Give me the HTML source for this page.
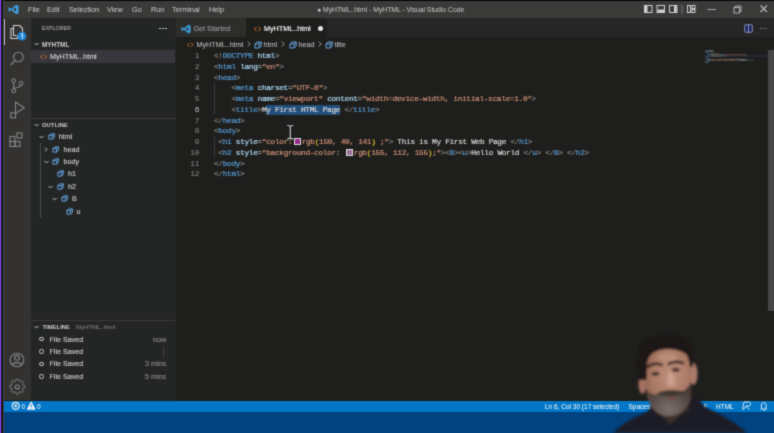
<!DOCTYPE html>
<html><head><meta charset="utf-8">
<style>
*{margin:0;padding:0;box-sizing:border-box}
html,body{width:774px;height:433px;overflow:hidden;background:#1e1e1c;font-family:"Liberation Sans",sans-serif}
.a{position:absolute;white-space:pre}
#purple{left:0;top:0;width:1px;height:433px;background:#8f44fc}
#dk{left:1px;top:0;width:2px;height:433px;background:#11151a}
#gr{left:3px;top:0;width:1px;height:433px;background:#45474a}
#topb{left:4px;top:0;width:770px;height:1px;background:#050505}
#title{left:4px;top:1px;width:770px;height:17px;background:#3a3a38}
#act{left:4px;top:18px;width:27px;height:382px;background:#333230}
#side{left:31px;top:18px;width:145px;height:382px;background:#242625}
#tabs{left:176px;top:18px;width:598px;height:19px;background:#252625}
#editor{left:176px;top:37px;width:598px;height:363px;background:#1e1e1c}
#status{left:4px;top:400.6px;width:770px;height:11px;background:#0277c8}
#below{left:4px;top:411.6px;width:770px;height:22px;background:#01427f}
.ui{font-size:7.2px;line-height:9px;-webkit-text-stroke:0.12px}
.bc{top:39.5px;color:#b4b4b4}
.st{top:402px;font-size:6.5px;line-height:9px;color:#ffffff}
.menu{top:5px;font-size:7.3px;color:#cccccc}
.code{-webkit-text-stroke:0.2px;font-family:"Liberation Mono",monospace;font-size:7.8px;letter-spacing:-0.33px;line-height:10.75px;color:#d4d4d4}
.ln{font-family:"Liberation Mono",monospace;font-size:7.8px;letter-spacing:-0.33px;color:#8c8c8c;text-align:right;width:20px}
.y{color:#e8c830}.g{color:#808080}.t{color:#569cd6}.at{color:#b0dcf6}.s{color:#ce9178}.w{color:#d4d4d4}
.sw{display:inline-block;width:6.6px;height:6.6px;border:0.8px solid #ddd;vertical-align:-0.8px;margin:0 1.1px 0 1.6px}
</style></head><body><svg width="0" height="0" style="position:absolute"><filter id="gb" x="0" y="0" width="100%" height="100%" color-interpolation-filters="sRGB"><feConvolveMatrix order="3" kernelMatrix="1 4 1 4 16 4 1 4 1" divisor="36" edgeMode="duplicate"/></filter></svg><div id="root" style="position:absolute;left:0;top:0;width:774px;height:433px;filter:url(#gb)">
<div class="a" id="purple"></div><div class="a" id="dk"></div><div class="a" id="gr"></div>
<div class="a" id="topb"></div>
<div class="a" id="title"></div>
<div class="a" id="act"></div>
<div class="a" id="side"></div>
<div class="a" id="tabs"></div>
<div class="a" id="editor"></div>
<div class="a" id="status"></div>
<div class="a" id="below"></div>

<!-- title bar -->
<svg class="a" style="left:8px;top:4px" width="11" height="11" viewBox="0 0 24 24"><path d="M17.5 1.5 L23 4 V20 L17.5 22.5 L7 13 L2.5 16.5 L1 15.5 V8.5 L2.5 7.5 L7 11 Z M17.5 7 L11 12 L17.5 17 Z" fill="#3c9fe0"/></svg>
<div class="a menu" style="left:28px">File</div>
<div class="a menu" style="left:47px">Edit</div>
<div class="a menu" style="left:69px">Selection</div>
<div class="a menu" style="left:107px">View</div>
<div class="a menu" style="left:132px">Go</div>
<div class="a menu" style="left:151px">Run</div>
<div class="a menu" style="left:172px">Terminal</div>
<div class="a menu" style="left:209px">Help</div>
<div class="a menu" style="left:317px;color:#c8c8c8;font-size:6.8px;top:5.5px">● MyHTML..html - MyHTML - Visual Studio Code</div>


<!-- activity bar -->
<div class="a" style="left:4px;top:19px;width:1px;height:26px;background:#bdbdbd"></div>
<svg class="a" style="left:0;top:0" width="31" height="400" viewBox="0 0 31 400">
 <g fill="none" stroke="#d0d0d0" stroke-width="1.1" stroke-linejoin="round">
  <path d="M13.5 28.5 H11 V38.5 H17.5 V36"/>
  <path d="M13.5 25.5 H19.5 L22.5 28.5 V33 M13.5 25.5 V35.5 H17"/>
 </g>
 <circle cx="21.9" cy="36.2" r="4.4" fill="#1f86d6"/>
 <path d="M21.3 34.2 L22.3 33.6 V38.6" stroke="#fff" stroke-width="0.9" fill="none"/>
 <g fill="none" stroke="#868686" stroke-width="1.1">
  <circle cx="18.4" cy="57" r="4.8"/>
  <path d="M15 60.5 L10.8 65"/>
  <circle cx="13.7" cy="80.6" r="1.9"/>
  <circle cx="21" cy="83.4" r="1.9"/>
  <circle cx="13.7" cy="90.9" r="1.9"/>
  <path d="M13.7 82.5 V89 M21 85.3 C21 88 14.5 87 13.9 89"/>
  <path d="M15.5 102 L24.3 107.8 L15.5 113.5 Z"/>
  <rect x="10.8" y="112.8" width="4.8" height="5" fill="#333230"/>
  <rect x="10" y="136.5" width="5" height="5"/>
  <rect x="10" y="141.5" width="5" height="5"/>
  <rect x="15" y="141.5" width="5" height="5"/>
  <rect x="17" y="133" width="5" height="5"/>
  <circle cx="17" cy="360" r="6.8"/>
  <circle cx="17" cy="357.8" r="2.4"/>
  <path d="M12.5 365 C13.5 361.8 20.5 361.8 21.5 365"/>
 </g>
 <g transform="translate(17.3 387)" fill="none" stroke="#868686" stroke-width="1.1">
  <path d="M-1.5 -7 H1.5 L2 -5 L3.8 -4.2 L5.5 -5.4 L7.5 -3.4 L6.3 -1.6 L7 0.2 L9 0.7 V3.3 L7 3.8 L6.3 5.6 L7.5 7.4 L5.5 9.4 L3.8 8.2 L2 9 L1.5 11 H-1.5 L-2 9 L-3.8 8.2 L-5.5 9.4 L-7.5 7.4 L-6.3 5.6 L-7 3.8 L-9 3.3 V0.7 L-7 0.2 L-6.3 -1.6 L-7.5 -3.4 L-5.5 -5.4 L-3.8 -4.2 L-2 -5 Z" transform="translate(0 -2) scale(0.82)"/>
  <circle cx="0" cy="0" r="2"/>
 </g>
</svg>

<!-- window controls -->
<svg class="a" style="left:640px;top:1px" width="134" height="17" viewBox="640 1 134 17">
 <g fill="none" stroke="#cfcfcf" stroke-width="1">
  <rect x="644.5" y="5.5" width="7.5" height="7"/>
  <rect x="657" y="5.5" width="7.5" height="7"/>
  <rect x="669.5" y="5.5" width="7.5" height="7"/>
  <path d="M682 4.5 V13.5" stroke="#777"/>
  <rect x="687.5" y="5.5" width="3" height="7"/>
  <rect x="692" y="5.5" width="3" height="3"/>
  <rect x="692" y="9.5" width="3" height="3"/>
  <path d="M707.5 9.5 H716" stroke="#a8a8a8"/>
  <rect x="734" y="7.5" width="5.5" height="5.5" stroke="#b0b0b0"/>
  <path d="M735.5 7.5 V6 H741 V11.5 H739.5" stroke="#b0b0b0"/>
  <path d="M760.5 5.5 L767 12 M767 5.5 L760.5 12" stroke-width="1.1" stroke="#c4c4c4"/>
 </g>
 <rect x="645" y="6" width="2.5" height="6" fill="#cfcfcf"/>
 <rect x="657.5" y="9.5" width="6.5" height="2.5" fill="#cfcfcf"/>
 <rect x="674" y="6" width="2.5" height="6" fill="#cfcfcf"/>
</svg>

<!-- status bar -->
<svg class="a" style="left:0;top:400px" width="774" height="11" viewBox="0 400 774 11">
 <g fill="none" stroke="#e8f1f9" stroke-width="0.9">
  <circle cx="15.7" cy="405.8" r="3.5" stroke-width="1.2"/>
  <path d="M14.3 404.4 L17.1 407.2 M17.1 404.4 L14.3 407.2" stroke-width="1.1"/>
  <path d="M31.2 401.8 L35.2 409.3 H27.2 Z" fill="#e8f1f9" stroke-linejoin="round"/>
  <path d="M31.2 404.2 V407 M31.2 407.8 V408.5" stroke="#0678c9" stroke-width="0.9"/>
 </g>
</svg>
<div class="a st" style="left:21.5px">0</div>
<div class="a st" style="left:37px">0</div>
<div class="a st" style="left:545px">Ln 6, Col 30 (17 selected)</div>
<div class="a st" style="left:628.5px">Spaces: 4</div>
<div class="a st" style="left:676px">UTF-8</div>
<div class="a st" style="left:700px">LF</div>
<div class="a st" style="left:716px">HTML</div>
<svg class="a" style="left:740px;top:401px" width="30" height="10" viewBox="740 401 30 10">
 <g fill="none" stroke="#e8f1f9" stroke-width="0.9">
  <path d="M744 402 H749 C751 402 751 406 749 406 H746 L743.5 409.5 M746 406 L749.5 409.5 M744 402 L742.5 409.5"/>
  <path d="M760.5 409 H767 M761.5 408.5 V405 C761.5 401.8 766 401.8 766 405 V408.5 M763 410 H765"/>
 </g>
</svg>


<!-- selection + guides -->
<div class="a" style="left:266.4px;top:104.5px;width:73.8px;height:10px;background:#224e7c"></div>
<div class="a" style="left:214px;top:83px;width:1px;height:31px;background:#3b3b3b"></div>
<div class="a" style="left:214px;top:136.5px;width:1px;height:20.5px;background:#3b3b3b"></div>

<!-- code -->
<div class="a ln" style="left:179px;top:51px;line-height:10.75px">1
2
3
4
5
<span style="color:#c6c6c6">6</span>
7
8
9
10
11
12</div>
<div class="a code" style="left:214px;top:51px"><span class="g">&lt;!</span><span class="t">DOCTYPE</span> <span class="at">html</span><span class="g">&gt;</span>
<span class="g">&lt;</span><span class="t">html</span> <span class="at">lang</span>=<span class="s">"en"</span><span class="g">&gt;</span>
<span class="g">&lt;</span><span class="t">head</span><span class="g">&gt;</span>
    <span class="g">&lt;</span><span class="t">meta</span> <span class="at">charset</span>=<span class="s">"UTF-8"</span><span class="g">&gt;</span>
    <span class="g">&lt;</span><span class="t">meta</span> <span class="at">name</span>=<span class="s">"viewport"</span> <span class="at">content</span>=<span class="s">"width=device-width, initial-scale=1.0"</span><span class="g">&gt;</span>
    <span class="g">&lt;</span><span class="t">title</span><span class="g">&gt;</span>My First HTML Page <span class="g">&lt;/</span><span class="t">title</span><span class="g">&gt;</span>
<span class="g">&lt;/</span><span class="t">head</span><span class="g">&gt;</span>
<span class="g">&lt;</span><span class="t">body</span><span class="g">&gt;</span>
 <span class="g">&lt;</span><span class="t">h1</span> <span class="at">style</span>=<span class="s">"color:</span><span class="sw" style="background:#96288d"></span><span class="s">rgb<span class="y">(</span>150, 40, 141<span class="y">)</span> ;"</span><span class="g">&gt;</span> This is My First Web Page <span class="g">&lt;/</span><span class="t">h1</span><span class="g">&gt;</span>
 <span class="g">&lt;</span><span class="t">h2</span> <span class="at">style</span>=<span class="s">"background-color: </span><span class="sw" style="background:#9b709b"></span><span class="s">rgb<span class="y">(</span>155, 112, 155<span class="y">)</span>;"</span><span class="g">&gt;</span><span class="g">&lt;</span><span class="t">B</span><span class="g">&gt;&lt;</span><span class="t">u</span><span class="g">&gt;</span>Hello World <span class="g">&lt;/</span><span class="t">u</span><span class="g">&gt;</span> <span class="g">&lt;/</span><span class="t">B</span><span class="g">&gt;</span> <span class="g">&lt;/</span><span class="t">h2</span><span class="g">&gt;</span>
<span class="g">&lt;/</span><span class="t">body</span><span class="g">&gt;</span>
<span class="g">&lt;/</span><span class="t">html</span><span class="g">&gt;</span></div>


<!-- tabs -->
<div class="a" style="left:176px;top:18px;width:70px;height:19px;background:#2d2d2c"></div>
<div class="a" style="left:246px;top:18px;width:81px;height:19px;background:#1e1e1c"></div>
<svg class="a" style="left:181px;top:23.5px" width="10" height="10" viewBox="0 0 24 24"><path d="M17.5 1.5 L23 4 V20 L17.5 22.5 L7 13 L2.5 16.5 L1 15.5 V8.5 L2.5 7.5 L7 11 Z M17.5 7 L11 12 L17.5 17 Z" fill="#3c9fe0"/></svg>
<div class="a ui" style="left:193.5px;top:24px;color:#9a9a9a">Get Started</div>
<svg class="a" style="left:254px;top:25.5px" width="7" height="6" viewBox="0 0 14 12"><path d="M5 1.5 L1.2 6 L5 10.5 M9 1.5 L12.8 6 L9 10.5" stroke="#e37933" stroke-width="1.8" fill="none"/></svg>
<div class="a ui" style="left:264px;top:24px;color:#ffffff">MyHTML..html</div>
<div class="a" style="left:317.5px;top:26px;width:5px;height:5px;border-radius:50%;background:#e8e8e8"></div>
<!-- editor actions -->
<svg class="a" style="left:744px;top:23.5px" width="9" height="9" viewBox="0 0 18 18"><rect x="1.5" y="1.5" width="15" height="15" rx="1.5" stroke="#9aa2cc" stroke-width="1.8" fill="#1a2458"/><line x1="9" y1="1.5" x2="9" y2="16.5" stroke="#9aa2cc" stroke-width="1.8"/></svg>
<div class="a" style="left:759.5px;top:27.5px;width:1.6px;height:1.6px;background:#a0a0a0;box-shadow:2.8px 0 #a0a0a0,5.6px 0 #a0a0a0"></div>
<!-- breadcrumbs -->
<svg class="a" style="left:187px;top:41.5px" width="6.5" height="5.5" viewBox="0 0 14 12"><path d="M5 1.5 L1.2 6 L5 10.5 M9 1.5 L12.8 6 L9 10.5" stroke="#e37933" stroke-width="1.8" fill="none"/></svg>
<div class="a ui bc" style="left:196.5px">MyHTML..html</div>
<svg class="a" style="left:247.0px;top:41px" width="4" height="6" viewBox="0 0 4 6"><path d="M0.7 0.5 L3.2 3 L0.7 5.5" stroke="#a8a8a8" stroke-width="0.9" fill="none"/></svg>
<svg class="a cube" style="left:254px;top:40.5px" width="8" height="8" viewBox="0 0 16 16"><path d="M2 6 L6 2 H14.5 V10 L10.5 14 H2 Z M2 6 H10.5 L14.5 2 M10.5 6 V14" stroke="#6cb4f8" stroke-width="1.8" fill="none" stroke-linejoin="round"/></svg>
<div class="a ui bc" style="left:263.5px">html</div>
<svg class="a" style="left:281.0px;top:41px" width="4" height="6" viewBox="0 0 4 6"><path d="M0.7 0.5 L3.2 3 L0.7 5.5" stroke="#a8a8a8" stroke-width="0.9" fill="none"/></svg>
<svg class="a cube" style="left:288.5px;top:40.5px" width="8" height="8" viewBox="0 0 16 16"><path d="M2 6 L6 2 H14.5 V10 L10.5 14 H2 Z M2 6 H10.5 L14.5 2 M10.5 6 V14" stroke="#6cb4f8" stroke-width="1.8" fill="none" stroke-linejoin="round"/></svg>
<div class="a ui bc" style="left:298.5px">head</div>
<svg class="a" style="left:317.5px;top:41px" width="4" height="6" viewBox="0 0 4 6"><path d="M0.7 0.5 L3.2 3 L0.7 5.5" stroke="#a8a8a8" stroke-width="0.9" fill="none"/></svg>
<svg class="a cube" style="left:324.5px;top:40.5px" width="8" height="8" viewBox="0 0 16 16"><path d="M2 6 L6 2 H14.5 V10 L10.5 14 H2 Z M2 6 H10.5 L14.5 2 M10.5 6 V14" stroke="#6cb4f8" stroke-width="1.8" fill="none" stroke-linejoin="round"/></svg>
<div class="a ui bc" style="left:334.5px">title</div>

<!-- sidebar -->
<div class="a sm" style="left:42px;top:24.5px;font-size:5.3px;color:#bbbbbb">EXPLORER</div>
<div class="a" style="left:159px;top:27.5px;width:1.6px;height:1.6px;background:#c5c5c5;box-shadow:3px 0 #c5c5c5,6px 0 #c5c5c5"></div>
<svg class="a" style="left:33.5px;top:41.5px" width="5" height="4" viewBox="0 0 10 8"><path d="M1 2 L5 6 L9 2" stroke="#c8c8c8" stroke-width="1.9" fill="none"/></svg>
<div class="a" style="left:42px;top:41px;font-size:6.4px;font-weight:bold;color:#cccccc">MYHTML</div>
<div class="a" style="left:31px;top:50px;width:144px;height:12.5px;background:#37373d"></div>
<svg class="a" style="left:39.5px;top:53.5px" width="7" height="6" viewBox="0 0 14 12"><path d="M5 1.5 L1.2 6 L5 10.5 M9 1.5 L12.8 6 L9 10.5" stroke="#e37933" stroke-width="1.8" fill="none"/></svg>
<div class="a ui" style="left:50px;top:52px;color:#d6d6d6">MyHTML..html</div>

<div class="a" style="left:31px;top:118px;width:144px;height:1px;background:#393939"></div>
<svg class="a" style="left:33.5px;top:122.5px" width="5" height="4" viewBox="0 0 10 8"><path d="M1 2 L5 6 L9 2" stroke="#c8c8c8" stroke-width="1.9" fill="none"/></svg>
<div class="a" style="left:42px;top:122px;font-size:5.9px;font-weight:bold;color:#cccccc">OUTLINE</div>
<div class="a" style="left:40px;top:143px;width:1px;height:75px;background:#4a4a4a"></div>

<div class="a" style="left:31px;top:320px;width:144px;height:1px;background:#393939"></div>
<svg class="a" style="left:33.5px;top:325px" width="5" height="4" viewBox="0 0 10 8"><path d="M1 2 L5 6 L9 2" stroke="#c8c8c8" stroke-width="1.9" fill="none"/></svg>
<div class="a" style="left:42.5px;top:323.5px;font-size:5.9px;font-weight:bold;color:#cccccc">TIMELINE</div>
<div class="a" style="left:76px;top:323.5px;font-size:6px;color:#8a8a8a">MyHTML..html</div>
<svg class="a" style="left:38.9px;top:134.9px" width="5" height="4" viewBox="0 0 10 8"><path d="M1 2 L5 6 L9 2" stroke="#c8c8c8" stroke-width="1.9" fill="none"/></svg>
<svg class="a" style="left:47.8px;top:133.4px" width="7" height="7" viewBox="0 0 16 16"><path d="M2 6 L6 2 H14.5 V10 L10.5 14 H2 Z M2 6 H10.5 L14.5 2 M10.5 6 V14" stroke="#6cb4f8" stroke-width="2" fill="none" stroke-linejoin="round"/></svg>
<div class="a ui" style="left:58.7px;top:132.4px;color:#cccccc">html</div>
<svg class="a" style="left:44px;top:146.8px" width="4" height="5" viewBox="0 0 8 10"><path d="M2 1 L6 5 L2 9" stroke="#c8c8c8" stroke-width="1.9" fill="none"/></svg>
<svg class="a" style="left:52.3px;top:145.8px" width="7" height="7" viewBox="0 0 16 16"><path d="M2 6 L6 2 H14.5 V10 L10.5 14 H2 Z M2 6 H10.5 L14.5 2 M10.5 6 V14" stroke="#6cb4f8" stroke-width="2" fill="none" stroke-linejoin="round"/></svg>
<div class="a ui" style="left:63.5px;top:144.8px;color:#cccccc">head</div>
<svg class="a" style="left:44px;top:159.6px" width="5" height="4" viewBox="0 0 10 8"><path d="M1 2 L5 6 L9 2" stroke="#c8c8c8" stroke-width="1.9" fill="none"/></svg>
<svg class="a" style="left:52.3px;top:158.1px" width="7" height="7" viewBox="0 0 16 16"><path d="M2 6 L6 2 H14.5 V10 L10.5 14 H2 Z M2 6 H10.5 L14.5 2 M10.5 6 V14" stroke="#6cb4f8" stroke-width="2" fill="none" stroke-linejoin="round"/></svg>
<div class="a ui" style="left:63.5px;top:157.1px;color:#cccccc">body</div>
<svg class="a" style="left:56.6px;top:170.4px" width="7" height="7" viewBox="0 0 16 16"><path d="M2 6 L6 2 H14.5 V10 L10.5 14 H2 Z M2 6 H10.5 L14.5 2 M10.5 6 V14" stroke="#6cb4f8" stroke-width="2" fill="none" stroke-linejoin="round"/></svg>
<div class="a ui" style="left:67.9px;top:169.4px;color:#cccccc">h1</div>
<svg class="a" style="left:48.3px;top:184.5px" width="5" height="4" viewBox="0 0 10 8"><path d="M1 2 L5 6 L9 2" stroke="#c8c8c8" stroke-width="1.9" fill="none"/></svg>
<svg class="a" style="left:56.6px;top:183.0px" width="7" height="7" viewBox="0 0 16 16"><path d="M2 6 L6 2 H14.5 V10 L10.5 14 H2 Z M2 6 H10.5 L14.5 2 M10.5 6 V14" stroke="#6cb4f8" stroke-width="2" fill="none" stroke-linejoin="round"/></svg>
<div class="a ui" style="left:67.9px;top:182.0px;color:#cccccc">h2</div>
<svg class="a" style="left:52.3px;top:196.8px" width="5" height="4" viewBox="0 0 10 8"><path d="M1 2 L5 6 L9 2" stroke="#c8c8c8" stroke-width="1.9" fill="none"/></svg>
<svg class="a" style="left:61px;top:195.3px" width="7" height="7" viewBox="0 0 16 16"><path d="M2 6 L6 2 H14.5 V10 L10.5 14 H2 Z M2 6 H10.5 L14.5 2 M10.5 6 V14" stroke="#6cb4f8" stroke-width="2" fill="none" stroke-linejoin="round"/></svg>
<div class="a ui" style="left:72px;top:194.3px;color:#cccccc">B</div>
<svg class="a" style="left:65.5px;top:207.5px" width="7" height="7" viewBox="0 0 16 16"><path d="M2 6 L6 2 H14.5 V10 L10.5 14 H2 Z M2 6 H10.5 L14.5 2 M10.5 6 V14" stroke="#6cb4f8" stroke-width="2" fill="none" stroke-linejoin="round"/></svg>
<div class="a ui" style="left:76.4px;top:206.5px;color:#cccccc">u</div>
<div class="a" style="left:39.3px;top:336.9px;width:4.6px;height:4.6px;border-radius:50%;border:1.2px solid #c5c5c5"></div>
<div class="a ui" style="left:49.4px;top:334.7px;color:#cccccc">File Saved</div>
<div class="a ui" style="right:607.8px;top:334.7px;color:#8a8a8a">now</div>
<div class="a" style="left:39.3px;top:349.09999999999997px;width:4.6px;height:4.6px;border-radius:50%;border:1.2px solid #c5c5c5"></div>
<div class="a ui" style="left:49.4px;top:346.9px;color:#cccccc">File Saved</div>
<div class="a" style="left:39.3px;top:361.5px;width:4.6px;height:4.6px;border-radius:50%;border:1.2px solid #c5c5c5"></div>
<div class="a ui" style="left:49.4px;top:359.3px;color:#cccccc">File Saved</div>
<div class="a ui" style="right:607.8px;top:359.3px;color:#8a8a8a">3 mins</div>
<div class="a" style="left:39.3px;top:374.0px;width:4.6px;height:4.6px;border-radius:50%;border:1.2px solid #c5c5c5"></div>
<div class="a ui" style="left:49.4px;top:371.8px;color:#cccccc">File Saved</div>
<div class="a ui" style="right:607.8px;top:371.8px;color:#8a8a8a">5 mins</div>
<div class="a" style="left:162.5px;top:347px;width:0.6px;height:10px;background:#444"></div>

<!-- I-beam -->
<svg class="a" style="left:284px;top:122px" width="12" height="20" viewBox="284 122 12 20">
 <path d="M287.2 125.5 C288.5 125.5 289.6 125.5 290.3 126.5 C291 125.5 292 125.5 293.3 125.5 M290.3 126.5 V137.8 M287.2 138.8 C288.5 138.8 289.6 138.8 290.3 137.8 C291 138.8 292 138.8 293.3 138.8" stroke="#111" stroke-width="2.6" fill="none"/>
 <path d="M287.2 125.5 C288.5 125.5 289.6 125.5 290.3 126.5 C291 125.5 292 125.5 293.3 125.5 M290.3 126.5 V137.8 M287.2 138.8 C288.5 138.8 289.6 138.8 290.3 137.8 C291 138.8 292 138.8 293.3 138.8" stroke="#cfcfcf" stroke-width="1.2" fill="none"/>
</svg>
<!-- scrollbar -->
<div class="a" style="left:768px;top:90px;width:6px;height:1px;background:#6a6a6a"></div>
<div class="a" style="left:768px;top:50px;width:6px;height:261px;background:#474747"></div>
<svg class="a" style="left:700px;top:46px;opacity:0.45" width="70" height="22" viewBox="700 46 70 22">
<rect x="705" y="55.5" width="63" height="1" fill="#264f78"/>
<rect x="705.00" y="50.00" width="1.14" height="0.9" fill="#808080"/><rect x="706.14" y="50.00" width="3.99" height="0.9" fill="#569cd6"/><rect x="710.13" y="50.00" width="0.57" height="0.9" fill="#d4d4d4"/><rect x="710.70" y="50.00" width="2.28" height="0.9" fill="#9cdcfe"/><rect x="712.98" y="50.00" width="0.57" height="0.9" fill="#808080"/>
<rect x="705.00" y="51.10" width="0.57" height="0.9" fill="#808080"/><rect x="705.57" y="51.10" width="2.28" height="0.9" fill="#569cd6"/><rect x="707.85" y="51.10" width="0.57" height="0.9" fill="#d4d4d4"/><rect x="708.42" y="51.10" width="2.28" height="0.9" fill="#9cdcfe"/><rect x="710.70" y="51.10" width="0.57" height="0.9" fill="#d4d4d4"/><rect x="711.27" y="51.10" width="2.28" height="0.9" fill="#ce9178"/><rect x="713.55" y="51.10" width="0.57" height="0.9" fill="#808080"/>
<rect x="705.00" y="52.20" width="0.57" height="0.9" fill="#808080"/><rect x="705.57" y="52.20" width="2.28" height="0.9" fill="#569cd6"/><rect x="707.85" y="52.20" width="0.57" height="0.9" fill="#808080"/>
<rect x="707.28" y="53.30" width="0.57" height="0.9" fill="#808080"/><rect x="707.85" y="53.30" width="2.28" height="0.9" fill="#569cd6"/><rect x="710.70" y="53.30" width="3.99" height="0.9" fill="#9cdcfe"/><rect x="714.69" y="53.30" width="0.57" height="0.9" fill="#d4d4d4"/><rect x="715.26" y="53.30" width="3.99" height="0.9" fill="#ce9178"/><rect x="719.25" y="53.30" width="0.57" height="0.9" fill="#808080"/>
<rect x="707.28" y="54.40" width="0.57" height="0.9" fill="#808080"/><rect x="707.85" y="54.40" width="2.28" height="0.9" fill="#569cd6"/><rect x="710.70" y="54.40" width="2.28" height="0.9" fill="#9cdcfe"/><rect x="712.98" y="54.40" width="0.57" height="0.9" fill="#d4d4d4"/><rect x="713.55" y="54.40" width="5.70" height="0.9" fill="#ce9178"/><rect x="719.82" y="54.40" width="3.99" height="0.9" fill="#9cdcfe"/><rect x="723.81" y="54.40" width="0.57" height="0.9" fill="#d4d4d4"/><rect x="724.38" y="54.40" width="22.23" height="0.9" fill="#ce9178"/><rect x="746.61" y="54.40" width="0.57" height="0.9" fill="#808080"/>
<rect x="707.28" y="55.50" width="0.57" height="0.9" fill="#808080"/><rect x="707.85" y="55.50" width="2.85" height="0.9" fill="#569cd6"/><rect x="710.70" y="55.50" width="0.57" height="0.9" fill="#808080"/><rect x="711.27" y="55.50" width="10.26" height="0.9" fill="#d4d4d4"/><rect x="721.53" y="55.50" width="1.14" height="0.9" fill="#808080"/><rect x="722.67" y="55.50" width="2.85" height="0.9" fill="#569cd6"/><rect x="725.52" y="55.50" width="0.57" height="0.9" fill="#808080"/>
<rect x="705.00" y="56.60" width="1.14" height="0.9" fill="#808080"/><rect x="706.14" y="56.60" width="2.28" height="0.9" fill="#569cd6"/><rect x="708.42" y="56.60" width="0.57" height="0.9" fill="#808080"/>
<rect x="705.00" y="57.70" width="0.57" height="0.9" fill="#808080"/><rect x="705.57" y="57.70" width="2.28" height="0.9" fill="#569cd6"/><rect x="707.85" y="57.70" width="0.57" height="0.9" fill="#808080"/>
<rect x="705.57" y="58.80" width="0.57" height="0.9" fill="#808080"/><rect x="706.14" y="58.80" width="1.14" height="0.9" fill="#569cd6"/><rect x="707.85" y="58.80" width="2.85" height="0.9" fill="#9cdcfe"/><rect x="710.70" y="58.80" width="0.57" height="0.9" fill="#d4d4d4"/><rect x="711.27" y="58.80" width="4.56" height="0.9" fill="#ce9178"/><rect x="716.97" y="58.80" width="11.97" height="0.9" fill="#ce9178"/><rect x="728.94" y="58.80" width="0.57" height="0.9" fill="#808080"/><rect x="729.51" y="58.80" width="15.39" height="0.9" fill="#d4d4d4"/><rect x="744.90" y="58.80" width="1.14" height="0.9" fill="#808080"/><rect x="746.04" y="58.80" width="1.14" height="0.9" fill="#569cd6"/><rect x="747.18" y="58.80" width="0.57" height="0.9" fill="#808080"/>
<rect x="705.57" y="59.90" width="0.57" height="0.9" fill="#808080"/><rect x="706.14" y="59.90" width="1.14" height="0.9" fill="#569cd6"/><rect x="707.85" y="59.90" width="2.85" height="0.9" fill="#9cdcfe"/><rect x="710.70" y="59.90" width="0.57" height="0.9" fill="#d4d4d4"/><rect x="711.27" y="59.90" width="10.83" height="0.9" fill="#ce9178"/><rect x="723.24" y="59.90" width="11.97" height="0.9" fill="#ce9178"/><rect x="735.21" y="59.90" width="0.57" height="0.9" fill="#808080"/><rect x="735.78" y="59.90" width="0.57" height="0.9" fill="#808080"/><rect x="736.35" y="59.90" width="0.57" height="0.9" fill="#569cd6"/><rect x="736.92" y="59.90" width="1.14" height="0.9" fill="#808080"/><rect x="738.06" y="59.90" width="0.57" height="0.9" fill="#569cd6"/><rect x="738.63" y="59.90" width="0.57" height="0.9" fill="#808080"/><rect x="739.20" y="59.90" width="6.84" height="0.9" fill="#d4d4d4"/><rect x="746.04" y="59.90" width="1.14" height="0.9" fill="#808080"/><rect x="747.18" y="59.90" width="0.57" height="0.9" fill="#569cd6"/><rect x="747.75" y="59.90" width="1.14" height="0.9" fill="#808080"/><rect x="748.89" y="59.90" width="1.14" height="0.9" fill="#808080"/><rect x="750.03" y="59.90" width="0.57" height="0.9" fill="#569cd6"/><rect x="750.60" y="59.90" width="1.14" height="0.9" fill="#808080"/><rect x="751.74" y="59.90" width="1.14" height="0.9" fill="#808080"/><rect x="752.88" y="59.90" width="1.14" height="0.9" fill="#569cd6"/><rect x="754.02" y="59.90" width="0.57" height="0.9" fill="#808080"/>
<rect x="705.00" y="61.00" width="1.14" height="0.9" fill="#808080"/><rect x="706.14" y="61.00" width="2.28" height="0.9" fill="#569cd6"/><rect x="708.42" y="61.00" width="0.57" height="0.9" fill="#808080"/>
<rect x="705.00" y="62.10" width="1.14" height="0.9" fill="#808080"/><rect x="706.14" y="62.10" width="2.28" height="0.9" fill="#569cd6"/><rect x="708.42" y="62.10" width="0.57" height="0.9" fill="#808080"/>
</svg>

<!-- person -->
<svg class="a" style="left:600px;top:320px" width="174" height="113" viewBox="600 320 174 113">
 <defs>
  <filter id="bl" x="-20%" y="-20%" width="140%" height="140%"><feGaussianBlur stdDeviation="0.9"/></filter>
  <filter id="bl2" x="-30%" y="-30%" width="160%" height="160%"><feGaussianBlur stdDeviation="1.6"/></filter>
  <radialGradient id="skin" cx="0.55" cy="0.4" r="0.7">
   <stop offset="0" stop-color="#bf907c"/>
   <stop offset="0.55" stop-color="#aa7a66"/>
   <stop offset="1" stop-color="#805646"/>
  </radialGradient>
  <radialGradient id="beard" cx="0.5" cy="0.8" r="0.65">
   <stop offset="0" stop-color="#7a706b"/>
   <stop offset="0.55" stop-color="#5f534e"/>
   <stop offset="1" stop-color="#463a35"/>
  </radialGradient>
 </defs>
 <g filter="url(#bl)">
  <!-- shirt -->
  <path d="M613 433 C620 426 630 419 643 414 L650 409 L652 397 L668 421 L690 397 L697 397 L705 407 C722 415 736 423 747 433 Z" fill="#1b1e28"/>
  <!-- neck shadow -->
  <path d="M651 398 L692 396 L688 410 L670 424 L660 414 Z" fill="#3a2e2a"/>
  <!-- ears -->
  <ellipse cx="642.5" cy="384" rx="4" ry="10" fill="#a27060"/>
  <ellipse cx="693.5" cy="374" rx="4" ry="11" fill="#aa7a6a"/>
  <!-- face -->
  <path d="M646 356 C652 347 682 344 689 353 C692 364 692 385 690 398 C687 410 678 416 669 416 C659 416 652 410 649 401 C645 390 644 366 646 356 Z" fill="url(#skin)"/>
  <!-- beard -->
  <path d="M647 390 C651 396 656 395 662 393 C668 391 677 391 683 391 C687 389 690 385 690.5 381 C691.5 393 690 401 686 407 C680 414 673 416.5 668 416 C660 415 653 410 650 403 Z" fill="url(#beard)"/>
  <path d="M657 393.5 C662 389.5 677 388.5 685 392.5 C680 396.5 662 397.5 657 393.5 Z" fill="#433430"/>
  <ellipse cx="672" cy="398.5" rx="4.5" ry="1.7" fill="#6e4a42"/>
  <!-- hair -->
  <path d="M639 380 C636 363 637 350 643 342 C650 335 667 333 680 335.5 C690 339 694.5 350 693 367 L690 367 C689 360 688 356 686 354 C678 349 668 348 660 350 C652 352 648 356 647 364 L646.5 380 Z" fill="#1d1714"/>
  <!-- eyebrows -->
  <path d="M647 367.5 C651 363.5 658 362.5 662.5 365.5" stroke="#2e201a" stroke-width="2.6" fill="none"/>
  <path d="M668 364.5 C672 361.5 679 361 684 363.5" stroke="#2e201a" stroke-width="2.6" fill="none"/>
  <!-- eyes -->
  <ellipse cx="655.5" cy="373.8" rx="4" ry="2" fill="#45302a"/>
  <ellipse cx="675.6" cy="369.8" rx="4" ry="2" fill="#45302a"/>
 </g>
 <g filter="url(#bl2)">
  <path d="M668 372 C667.5 378 666 383 668 386 L675 386 C677 383 674 378 672 372 Z" fill="#d0a494" opacity="0.75"/>
  <ellipse cx="667" cy="357" rx="10" ry="4" fill="#c89e8e" opacity="0.4"/>
 </g>
</svg>
</div></body></html>
